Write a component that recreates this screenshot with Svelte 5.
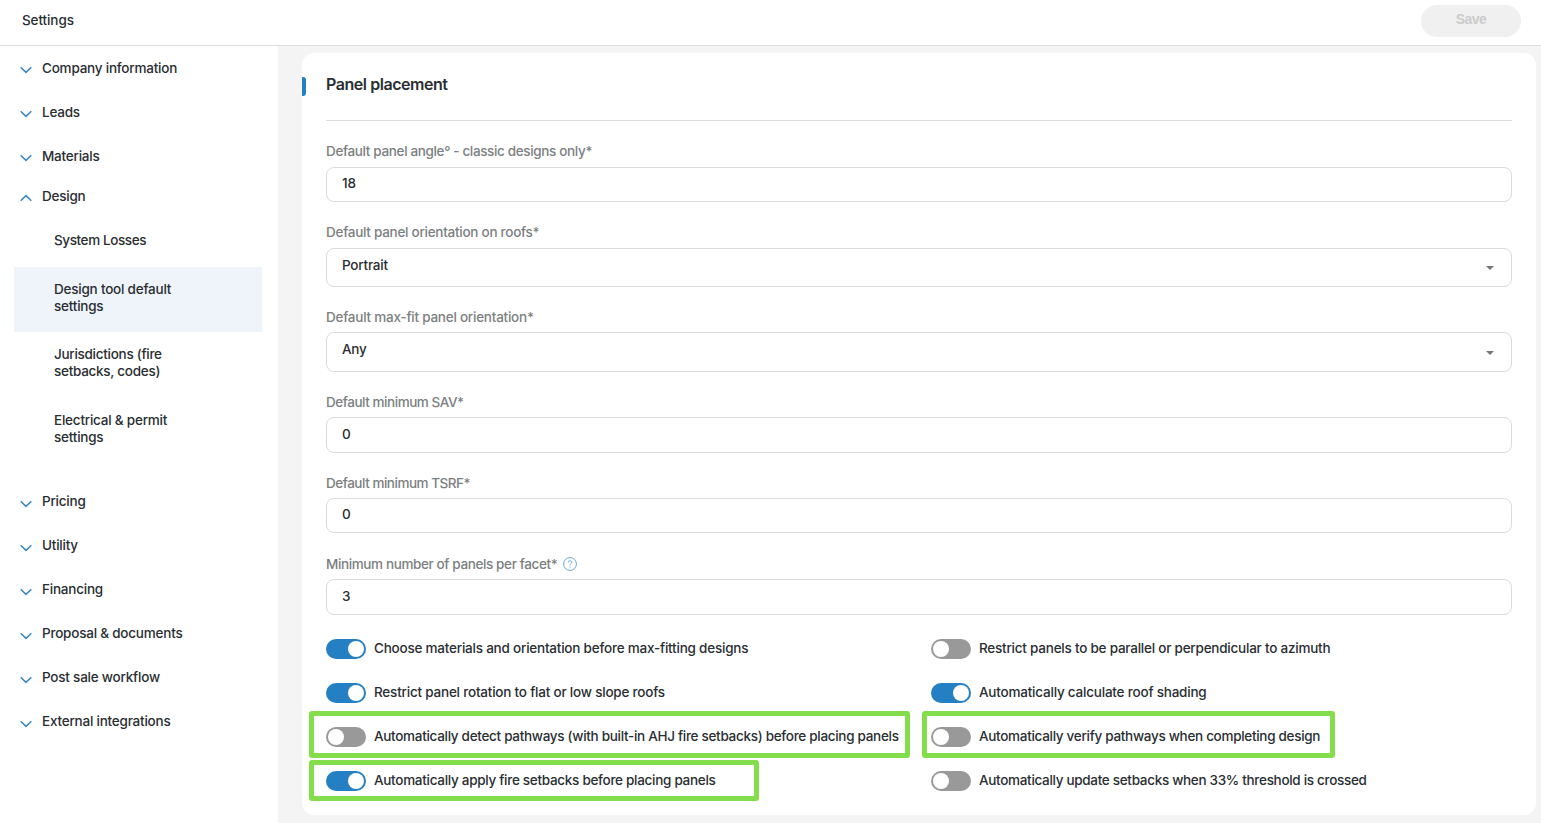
<script>
  const topItems = ['Company information', 'Leads', 'Materials'];
  const designItems = [
    { lines: ['System Losses'], kind: 'single' },
    { lines: ['Design tool default', 'settings'], kind: 'active' },
    { lines: ['Jurisdictions (fire', 'setbacks, codes)'], kind: 'tall' },
    { lines: ['Electrical & permit', 'settings'], kind: '' }
  ];
  const bottomItems = [
    'Pricing',
    'Utility',
    'Financing',
    'Proposal & documents',
    'Post sale workflow',
    'External integrations'
  ];

  const fields = [
    { label: 'Default panel angle° - classic designs only*', value: '18', type: 'short', spacing: -0.35 },
    { label: 'Default panel orientation on roofs*', value: 'Portrait', type: 'select', spacing: -0.27 },
    { label: 'Default max-fit panel orientation*', value: 'Any', type: 'select tall', spacing: -0.24 },
    { label: 'Default minimum SAV*', value: '0', type: 'text', spacing: -0.45 },
    { label: 'Default minimum TSRF*', value: '0', type: 'short', spacing: -0.47 },
    { label: 'Minimum number of panels per facet*', value: '3', type: 'text', help: true, spacing: -0.38 }
  ];

  let toggles = $state([
    { label: 'Choose materials and orientation before max-fitting designs', on: true, spacing: -0.22 },
    { label: 'Restrict panels to be parallel or perpendicular to azimuth', on: false, spacing: -0.23 },
    { label: 'Restrict panel rotation to flat or low slope roofs', on: true, spacing: -0.21 },
    { label: 'Automatically calculate roof shading', on: true, spacing: -0.21 },
    { label: 'Automatically detect pathways (with built-in AHJ fire setbacks) before placing panels', on: false, mark: 'detect', spacing: -0.3 },
    { label: 'Automatically verify pathways when completing design', on: false, mark: 'verify', spacing: -0.3 },
    { label: 'Automatically apply fire setbacks before placing panels', on: true, mark: 'apply', spacing: -0.29 },
    { label: 'Automatically update setbacks when 33% threshold is crossed', on: false, spacing: -0.31 }
  ]);
</script>

{#snippet navItem(name, open)}
  <div class="nav-item" class:open>
    <svg class="chevron" width="12" height="8" viewBox="0 0 12 8">
      <path d={open ? 'M.7 6.7 6 1.6l5.3 5.1' : 'M.7 1.3 6 6.4l5.3-5.1'} />
    </svg>
    <span>{name}</span>
  </div>
{/snippet}

<div class="page">
  <header>
    <span class="heading">Settings</span>
    <button class="save" disabled>Save</button>
  </header>

  <div class="body">
    <nav>
      {#each topItems as item}
        {@render navItem(item, false)}
      {/each}
      {@render navItem('Design', true)}
      <div class="sub">
        {#each designItems as item}
          <div class="sub-item {item.kind}">
            {#each item.lines as line}
              <div>{line}</div>
            {/each}
          </div>
        {/each}
      </div>
      <div class="lower">
        {#each bottomItems as item}
          {@render navItem(item, false)}
        {/each}
      </div>
    </nav>

    <main>
      <section class="card">
        <h2>Panel placement</h2>
        <div class="fields">
          {#each fields as field}
            <div class="field">
              <div class="label">
                <span style:letter-spacing="{field.spacing}px">{field.label}</span>
                {#if field.help}
                  <svg class="help" width="14" height="14" viewBox="0 0 14 14">
                    <circle cx="7" cy="7" r="6.4" />
                    <path d="M5.2 5.5c0-1.1.7-1.8 1.8-1.8s1.8.7 1.8 1.6c0 1.4-1.8 1.4-1.8 2.9M7 9.5v1" />
                  </svg>
                {/if}
              </div>
              <div class="control {field.type}">
                <span>{field.value}</span>
                {#if field.type.startsWith('select')}
                  <svg width="8" height="4" viewBox="0 0 8 4"><path d="M0 0h8L4 4z" fill="#777" /></svg>
                {/if}
              </div>
            </div>
          {/each}
        </div>

        <div class="toggles">
          {#each toggles as toggle}
            <div class="toggle">
              <button
                class="switch"
                class:on={toggle.on}
                aria-label={toggle.label}
                onclick={() => (toggle.on = !toggle.on)}
              ></button>
              <span style:letter-spacing="{toggle.spacing}px">{toggle.label}</span>
              {#if toggle.mark}
                <div class="mark {toggle.mark}"></div>
              {/if}
            </div>
          {/each}
        </div>
      </section>
    </main>
  </div>
</div>

<style>
  :global(body) {
    margin: 0;
    overflow: hidden;
  }
  .page {
    height: 823px;
    display: flex;
    flex-direction: column;
    font-family: Inter, 'Liberation Sans', sans-serif;
    font-size: 13.5px;
    font-weight: 500;
    line-height: 17px;
    letter-spacing: -0.22px;
    color: #292e32;
    background: #fff;
    white-space: nowrap;
  }
  header {
    height: 45px;
    flex-shrink: 0;
    display: flex;
    justify-content: space-between;
    align-items: flex-start;
    padding: 0 20px 0 22px;
    border-bottom: 1px solid #dcdcde;
  }
  .heading {
    padding-top: 12px;
    letter-spacing: -0.1px;
  }
  .save {
    width: 100px;
    height: 32px;
    margin-top: 5px;
    padding: 0 0 4px;
    border: 0;
    border-radius: 16px;
    background: #f0f0f0;
    color: #cbcbcb;
    font: bold 14px 'Liberation Sans', sans-serif;
    letter-spacing: -0.5px;
  }
  .body {
    flex: 1;
    display: flex;
    min-height: 0;
  }
  nav {
    width: 278px;
    flex-shrink: 0;
  }
  .nav-item {
    height: 44px;
    display: flex;
    align-items: center;
    padding-left: 20px;
    gap: 10px;
  }
  .nav-item.open {
    height: 37px;
  }
  .lower span {
    margin-top: -2px;
  }
  .chevron {
    margin-top: 3px;
  }
  .chevron path {
    fill: none;
    stroke: #3c87bf;
    stroke-width: 1.5;
  }
  .sub {
    padding: 3px 16px 17px 14px;
  }
  .sub-item {
    height: 49px;
    padding: 14px 0 2px 40px;
  }
  .sub-item.single {
    height: 33px;
    letter-spacing: -0.4px;
  }
  .sub-item.tall {
    height: 50px;
    letter-spacing: -0.28px;
  }
  .sub-item.active {
    background: #eff4fb;
  }
  main {
    flex: 1;
    padding: 7px 5px 8px 24px;
    background: #f4f4f4;
  }
  .card {
    height: 762px;
    box-sizing: border-box;
    padding: 0 24px;
    border-radius: 12px;
    background: #fff;
  }
  h2 {
    position: relative;
    height: 67px;
    margin: 0 0 22px;
    border-bottom: 1px solid #dcdcde;
    font-size: 16px;
    font-weight: 600;
    line-height: 62px;
    letter-spacing: -0.45px;
  }
  h2::before {
    content: '';
    position: absolute;
    left: -24px;
    top: 24px;
    width: 4px;
    height: 19px;
    border-radius: 0 3px 3px 0;
    background: #2580c3;
  }
  .fields {
    display: grid;
    grid-template-rows: 81px 85px 85px 81px 81px 83px;
  }
  .label {
    display: flex;
    align-items: center;
    gap: 6px;
    height: 17px;
    margin-bottom: 7px;
    color: #7c7f81;
  }
  .field:nth-child(n + 3) .label {
    margin-bottom: 6px;
  }
  .help {
    margin-top: -2px;
  }
  .help circle,
  .help path {
    fill: none;
    stroke: #6ba6d2;
  }
  .control {
    box-sizing: border-box;
    height: 36px;
    display: flex;
    justify-content: space-between;
    align-items: center;
    padding: 0 17px 2px 15px;
    border: 1px solid #dadbdd;
    border-radius: 8px;
  }
  .control.short {
    height: 35px;
  }
  .control.select {
    height: 39px;
    padding-bottom: 4px;
  }
  .control.tall {
    height: 40px;
    padding-bottom: 6px;
  }
  .control svg {
    margin-top: 5px;
  }
  .control.tall svg {
    margin-top: 7px;
  }
  .toggles {
    display: grid;
    grid-template-columns: 605px 1fr;
    grid-auto-rows: 20px;
    row-gap: 24px;
  }
  .toggle {
    position: relative;
    display: flex;
    align-items: center;
    gap: 8px;
  }
  .toggle span {
    margin-top: -1px;
  }
  .switch {
    width: 40px;
    height: 20px;
    flex-shrink: 0;
    display: flex;
    align-items: center;
    padding: 0 2px;
    border: 0;
    border-radius: 10px;
    background: #999;
  }
  .switch::before {
    content: '';
    width: 16px;
    height: 16px;
    border-radius: 50%;
    background: #fff;
  }
  .switch.on {
    justify-content: flex-end;
    background: #2580c3;
  }
  /* annotation boxes drawn over the toggles */
  .mark {
    position: absolute;
    box-sizing: border-box;
    border: 5.5px solid #84de4c;
    border-radius: 3px;
    pointer-events: none;
  }
  .mark.detect {
    left: -17px;
    top: -16px;
    width: 601px;
    height: 47px;
  }
  .mark.verify {
    left: -9px;
    top: -16px;
    width: 413px;
    height: 47px;
  }
  .mark.apply {
    left: -17px;
    top: -11px;
    width: 450px;
    height: 41px;
  }
</style>
